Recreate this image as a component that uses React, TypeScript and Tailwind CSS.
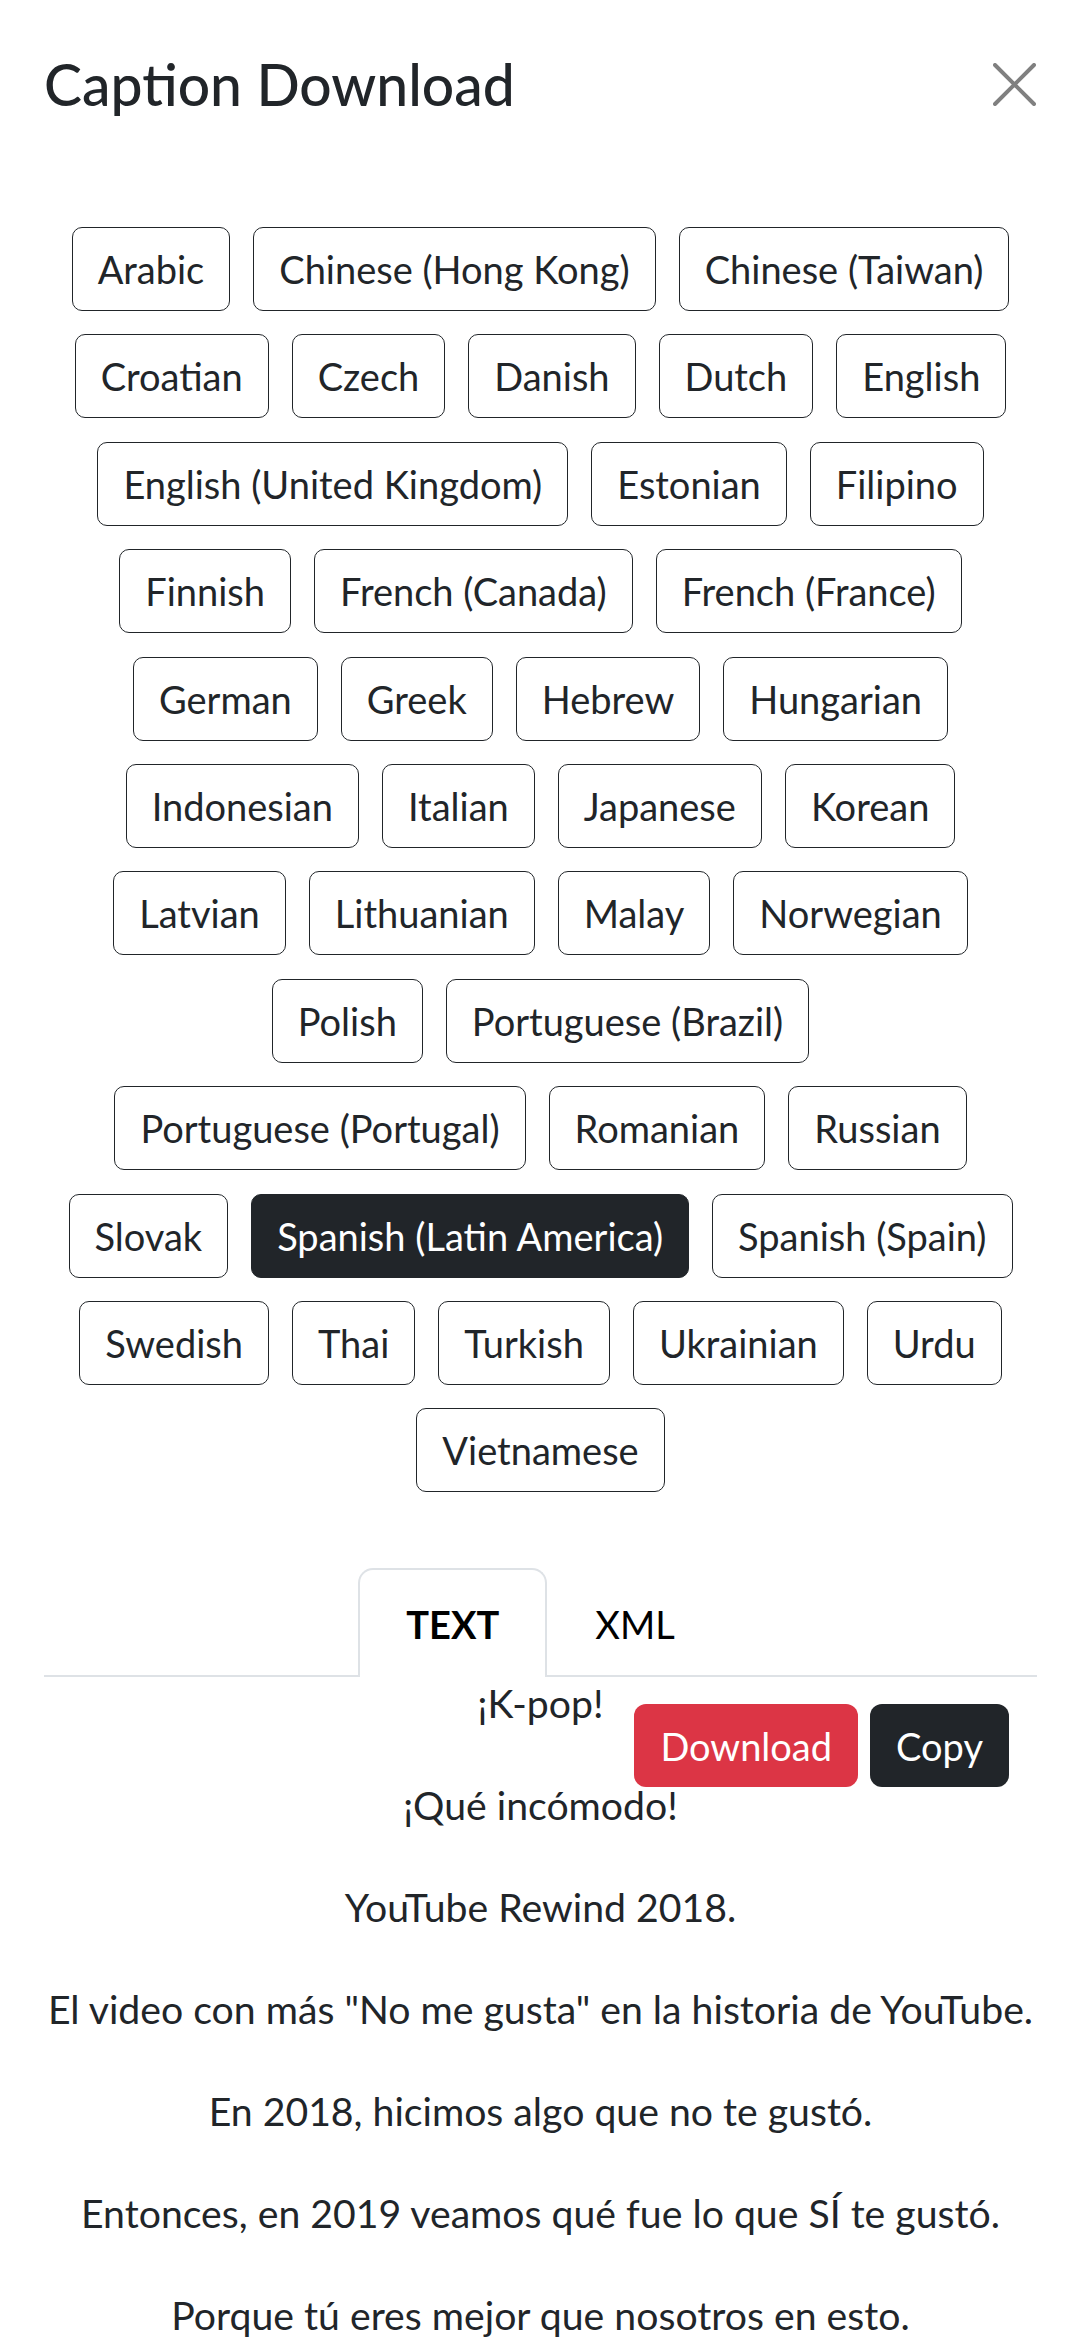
import React, { useState } from 'react';

const rows: string[][] = [
  ['Arabic', 'Chinese (Hong Kong)', 'Chinese (Taiwan)'],
  ['Croatian', 'Czech', 'Danish', 'Dutch', 'English'],
  ['English (United Kingdom)', 'Estonian', 'Filipino'],
  ['Finnish', 'French (Canada)', 'French (France)'],
  ['German', 'Greek', 'Hebrew', 'Hungarian'],
  ['Indonesian', 'Italian', 'Japanese', 'Korean'],
  ['Latvian', 'Lithuanian', 'Malay', 'Norwegian'],
  ['Polish', 'Portuguese (Brazil)'],
  ['Portuguese (Portugal)', 'Romanian', 'Russian'],
  ['Slovak', 'Spanish (Latin America)', 'Spanish (Spain)'],
  ['Swedish', 'Thai', 'Turkish', 'Ukrainian', 'Urdu'],
  ['Vietnamese'],
];

const lines = [
  '¡K-pop!',
  '¡Qué incómodo!',
  'YouTube Rewind 2018.',
  'El video con más "No me gusta" en la historia de YouTube.',
  'En 2018, hicimos algo que no te gustó.',
  'Entonces, en 2019 veamos qué fue lo que SÍ te gustó.',
  'Porque tú eres mejor que nosotros en esto.',
];

export default function App() {
  const [lang, setLang] = useState('Spanish (Latin America)');
  const [tab, setTab] = useState('TEXT');

  return (
    <div className="h-[2340px] overflow-hidden bg-white px-[44px] text-[#212529] font-['Lato','Liberation_Sans',sans-serif]">
      {/* header */}
      <div className="flex items-center justify-between pt-[50px]">
        <h5 className="text-[57px] leading-[68px] font-medium">Caption Download</h5>
        <button className="mr-[1px] flex h-[43px] w-[43px] items-center justify-center">
          <svg viewBox="0 0 43 43" width="43" height="43">
            <path d="M2 2 L41 41 M41 2 L2 41" stroke="#808080" strokeWidth="4" strokeLinecap="round" />
          </svg>
        </button>
      </div>

      {/* languages */}
      <div className="mt-[109px] flex flex-col gap-y-[23.4px]">
        {rows.map((row, i) => (
          <div key={i} className="flex justify-center gap-x-[23px]">
            {row.map((l) => (
              <button
                key={l}
                onClick={() => setLang(l)}
                className={
                  lang === l
                    ? 'h-[84px] rounded-[10px] border-[1.5px] border-[#212529] bg-[#212529] px-[25px] text-[38px] leading-none whitespace-nowrap text-white'
                    : 'h-[84px] rounded-[10px] border-[1.5px] border-[#212529] bg-white px-[25px] text-[38px] leading-none whitespace-nowrap text-[#212529]'
                }
              >
                {l}
              </button>
            ))}
          </div>
        ))}
      </div>

      {/* tabs */}
      <div className="mt-[76px] flex justify-center border-b-2 border-[#dee2e6]">
        {['TEXT', 'XML'].map((t) => (
          <button
            key={t}
            onClick={() => setTab(t)}
            className={
              tab === t
                ? '-mb-[2px] flex h-[109px] items-center rounded-t-[15px] border-2 border-b-0 border-[#dee2e6] bg-white px-[46px] pt-[2px] text-[38px] font-bold text-black'
                : '-mb-[2px] flex h-[109px] items-center rounded-t-[15px] border-2 border-b-0 border-transparent px-[46px] pt-[2px] text-[38px] text-black'
            }
          >
            {t}
          </button>
        ))}
      </div>

      {/* caption text */}
      <div className="relative">
        <div className="absolute right-[28px] top-[27px] flex gap-[12px]">
          <button className="h-[83px] rounded-[12px] bg-[#dc3545] px-[26px] text-[38px] leading-none text-white">Download</button>
          <button className="h-[83px] rounded-[12px] bg-[#212529] px-[26px] text-[38px] leading-none text-white">Copy</button>
        </div>
        {lines.map((l, i) => (
          <p key={i} className="mb-[50px] whitespace-nowrap text-center text-[39.2px] leading-[52px]">
            {l}
          </p>
        ))}
      </div>
    </div>
  );
}
